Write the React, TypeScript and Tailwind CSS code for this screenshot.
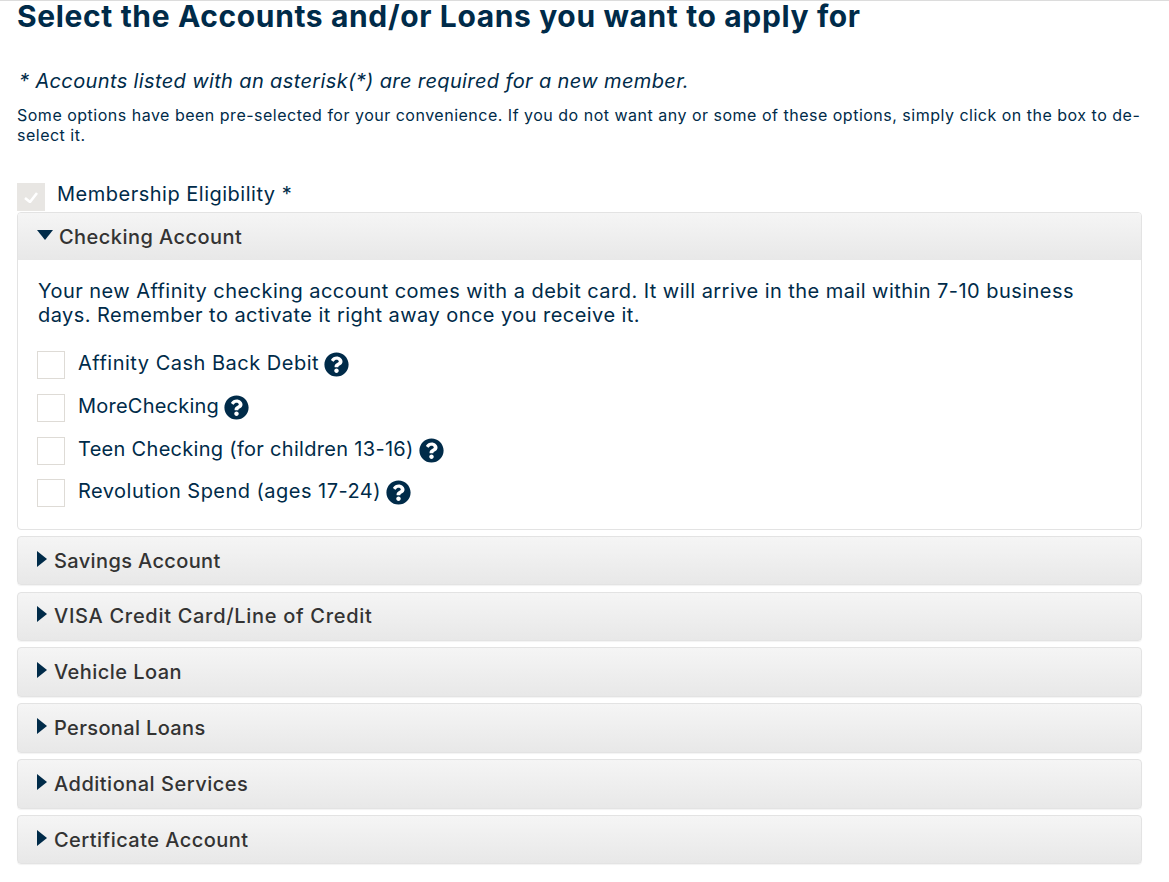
import React from "react";
import { FaQuestionCircle } from "react-icons/fa";

const font = "font-['Inter','Liberation_Sans',sans-serif]";

function Option({ label, h, track }: { label: string; h: string; track: string }) {
  return (
    <div className={`flex items-start ${h}`}>
      <span className="w-7 h-7 border border-[#dedbd6] bg-white shrink-0 mr-[13px]" />
      <span className={`text-[20px] leading-6 text-[#002b49] ${track}`}>{label}</span>
      <FaQuestionCircle className="w-[25px] h-[25px] shrink-0 ml-[5px] mt-px text-[#002b49]" />
    </div>
  );
}

function Closed({ label, track }: { label: string; track: string }) {
  return (
    <div className="h-[49.6px] mb-[6.2px] flex items-center pl-[19px] rounded border border-[#e3e3e3] bg-gradient-to-b from-[#f5f5f5] to-[#e8e8e8] shadow-[0_1px_1px_rgba(0,0,0,0.05)]">
      <svg viewBox="0 0 10 16" className="w-[10px] h-4 mr-[7px] mb-1">
        <path d="M0 0l10 8-10 8z" fill="#002b49" />
      </svg>
      <span className={`text-[20px] font-medium text-[#333] ${track}`}>{label}</span>
    </div>
  );
}

export default function App() {
  return (
    <div className={`${font} bg-white min-h-[882px] border-t border-[#dcdcdc] pl-[17px] pr-[27px] text-[#002b49]`}>
      <h1 className="text-[30px] font-bold leading-[30px] tracking-[0.63px]">
        Select the Accounts and/or Loans you want to apply for
      </h1>
      <p className="mt-[38px] ml-[2px] text-[20px] italic leading-6 tracking-[0.37px]">
        * Accounts listed with an asterisk(*) are required for a new member.
      </p>
      <p className="mt-3 text-[16px] leading-[20px] tracking-[0.5px]">
        Some options have been pre-selected for your convenience. If you do not want any or some of these options, simply click on the box to de-select it.
      </p>
      <div className="mt-[38px] flex items-start h-[29px]">
        <span className="w-7 h-7 bg-[#e8e6e3] shrink-0 mr-3 flex items-center justify-center">
          <svg viewBox="0 0 14 12" className="w-[14px] h-3">
            <path d="M1 7l5 4 7-9" stroke="#fff" strokeWidth="2.6" fill="none" />
          </svg>
        </span>
        <span className="-mt-px text-[20px] leading-6 tracking-[0.5px]">Membership Eligibility *</span>
      </div>
      <div className="rounded border border-[#e3e3e3] mb-[5.8px] h-[318px] overflow-hidden">
        <div className="h-[47px] flex items-center pl-[19px] bg-gradient-to-b from-[#f5f5f5] to-[#e8e8e8]">
          <svg viewBox="0 0 16 10" className="w-4 h-[10px] mr-[6px] mb-1">
            <path d="M0 0h16l-8 10z" fill="#002b49" />
          </svg>
          <span className="text-[20px] font-medium tracking-[0.45px] text-[#333]">Checking Account</span>
        </div>
        <div className="pt-[19px] pl-[19px] pr-5">
          <p className="ml-px text-[20px] leading-6 tracking-[0.45px] mb-6">
            Your new Affinity checking account comes with a debit card. It will arrive in the mail within 7-10 business days. Remember to activate it right away once you receive it.
          </p>
          <Option label="Affinity Cash Back Debit" h="h-[43px]" track="tracking-[0.5px]" />
          <Option label="MoreChecking" h="h-[43px]" track="tracking-[0.22px]" />
          <Option label="Teen Checking (for children 13-16)" h="h-[42px]" track="tracking-[0.3px]" />
          <Option label="Revolution Spend (ages 17-24)" h="h-[42px]" track="tracking-[0.47px]" />
        </div>
      </div>
      <Closed label="Savings Account" track="tracking-[0.37px]" />
      <Closed label="VISA Credit Card/Line of Credit" track="tracking-[0.7px]" />
      <Closed label="Vehicle Loan" track="tracking-[0.45px]" />
      <Closed label="Personal Loans" track="tracking-[0.36px]" />
      <Closed label="Additional Services" track="tracking-[0.5px]" />
      <Closed label="Certificate Account" track="tracking-[0.45px]" />
    </div>
  );
}
